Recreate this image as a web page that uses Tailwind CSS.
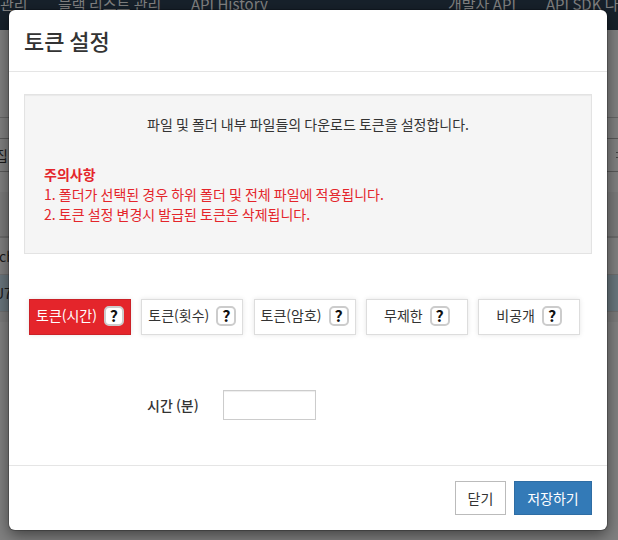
<!DOCTYPE html>
<html lang="ko">
<head>
<meta charset="utf-8">
<title>토큰 설정</title>
<script src="https://cdn.jsdelivr.net/npm/@tailwindcss/browser@4"></script>
</head>
<body class="relative w-[618px] h-[540px] overflow-hidden bg-[#808080] font-['Noto_Sans_CJK_KR',sans-serif] text-[14px] leading-5 text-[#333] [word-spacing:-0.8px]">
<!-- dimmed page -->
<div class="flex flex-col text-[#1a1a1a]">
  <div class="relative h-[30px] bg-[#17212b] text-[15px] leading-5 text-[#808080] whitespace-nowrap">
    <span class="absolute left-0 -top-[6px]">관리</span>
    <span class="absolute left-[58px] -top-[6px]">블랙 리스트 관리</span>
    <span class="absolute left-[191px] -top-[6px]">API History</span>
    <span class="absolute left-[448px] -top-[6px]">개발자 API</span>
    <span class="absolute left-[546px] -top-[6px]">API SDK 나</span>
  </div>
  <div class="h-[88px] border-b border-[#666]"></div>
  <div class="h-[20px]"></div>
  <div class="h-[34px] flex justify-between items-center border-y border-[#595959]"><span class="-ml-[5px]">집</span><span class="w-[2px] h-[6px] border-y border-[#444]"></span></div>
  <div class="h-[20px]"></div>
  <div class="h-[46px] bg-[#7b7b7b] border-b-2 border-[#6b6b6b]"></div>
  <div class="h-[37px] border-b border-[#6e6e6e] flex items-center"><span class="-ml-[1px]">ch</span></div>
  <div class="h-[37px] bg-[#69767d] border-b border-[#6e6e6e] flex items-center"><span class="-ml-[6px]">U7</span></div>
  <div class="h-[10px] bg-[#7b7b7b]"></div>
</div>
<!-- dialog -->
<div class="absolute left-[9px] top-[10px] w-[598px] h-[520px] rounded-[6px] bg-white shadow-[0_5px_15px_rgba(0,0,0,0.5),0_0_0_1px_rgba(0,0,0,0.2)] flex flex-col">
  <div class="h-[62px] shrink-0 border-b border-[#e5e5e5] px-[15px] pb-[2px] flex items-center"><h4 class="text-[22px] leading-6 font-medium [word-spacing:-1.3px]">토큰 설정</h4></div>
  <div class="h-[393px] shrink-0 px-[15px] pt-[22px]">
    <div class="h-[160px] border border-[#e3e3e3] bg-[#f5f5f5] shadow-[inset_0_1px_1px_rgba(0,0,0,0.05)] px-[19px] pt-[19px]">
      <p class="text-center">파일 및 폴더 내부 파일들의 다운로드 토큰을 설정합니다.</p>
      <div class="mt-[30px] text-[#e4252b]">
        <p class="font-bold">주의사항</p>
        <p>1. 폴더가 선택된 경우 하위 폴더 및 전체 파일에 적용됩니다.</p>
        <p>2. 토큰 설정 변경시 발급된 토큰은 삭제됩니다.</p>
      </div>
    </div>
    <div class="mt-[45px] ml-[5px] flex gap-[10.3px]">
      <div class="w-[102px] h-[36px] shrink-0 flex items-center justify-center gap-[7px] bg-[#e4252b] border border-[#cb2127] text-white shadow-[0_0_5px_rgba(0,0,0,0.1)]"><span class="-mt-1">토큰(시간)</span><b class="w-5 h-5 -mt-[2px] pb-[2px] rounded-[5px] border-2 border-[#ccc] bg-white text-[#111] text-[16px] flex items-center justify-center leading-4">?</b></div>
      <div class="w-[102px] h-[36px] shrink-0 flex items-center justify-center gap-[7px] bg-white border border-[#ddd] shadow-[0_0_5px_rgba(0,0,0,0.1)]"><span class="-mt-1">토큰(횟수)</span><b class="w-5 h-5 -mt-[2px] pb-[2px] rounded-[5px] border-2 border-[#ccc] bg-white text-[#111] text-[16px] flex items-center justify-center leading-4">?</b></div>
      <div class="w-[102px] h-[36px] shrink-0 flex items-center justify-center gap-[7px] bg-white border border-[#ddd] shadow-[0_0_5px_rgba(0,0,0,0.1)]"><span class="-mt-1">토큰(암호)</span><b class="w-5 h-5 -mt-[2px] pb-[2px] rounded-[5px] border-2 border-[#ccc] bg-white text-[#111] text-[16px] flex items-center justify-center leading-4">?</b></div>
      <div class="w-[102px] h-[36px] shrink-0 flex items-center justify-center gap-[7px] bg-white border border-[#ddd] shadow-[0_0_5px_rgba(0,0,0,0.1)]"><span class="-mt-1">무제한</span><b class="w-5 h-5 -mt-[2px] pb-[2px] rounded-[5px] border-2 border-[#ccc] bg-white text-[#111] text-[16px] flex items-center justify-center leading-4">?</b></div>
      <div class="w-[102px] h-[36px] shrink-0 flex items-center justify-center gap-[7px] bg-white border border-[#ddd] shadow-[0_0_5px_rgba(0,0,0,0.1)]"><span class="-mt-1">비공개</span><b class="w-5 h-5 -mt-[2px] pb-[2px] rounded-[5px] border-2 border-[#ccc] bg-white text-[#111] text-[16px] flex items-center justify-center leading-4">?</b></div>
    </div>
    <div class="mt-[55px] flex items-center">
      <label class="ml-[123px] w-[76px] font-medium">시간 (분)</label>
      <input class="w-[93px] h-[30px] border border-[#ccc] bg-white shadow-[inset_0_1px_1px_rgba(0,0,0,0.075)]">
    </div>
  </div>
  <div class="grow border-t border-[#e5e5e5] px-[15px] pt-[15px] flex justify-end gap-2">
    <button class="w-[51px] h-[34px] border border-[#bbb] bg-white text-[#333]">닫기</button>
    <button class="w-[78px] h-[34px] border border-[#2e6da4] bg-[#337ab7] text-white">저장하기</button>
  </div>
</div>
</body>
</html>
